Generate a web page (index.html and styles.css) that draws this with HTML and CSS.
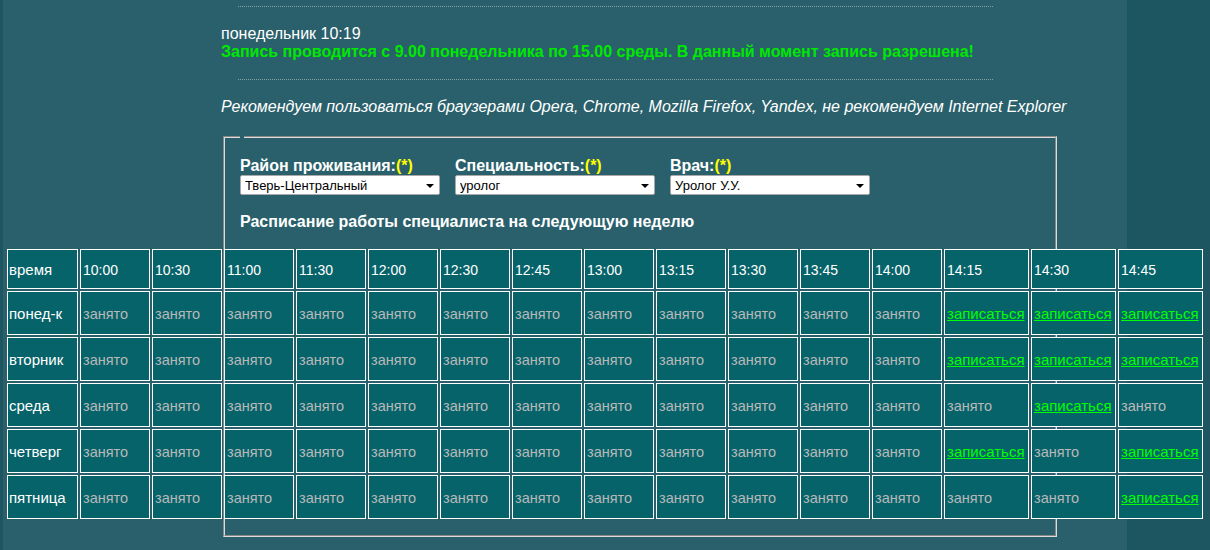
FILE: index.html
```html
<!DOCTYPE html>
<html lang="ru">
<head>
<meta charset="utf-8">
<title>Запись к врачу</title>
<link rel="stylesheet" href="styles.css">
</head>
<body>
<div class="page">
  <div class="content">
    <div class="rule"></div>
    <div class="status">понедельник 10:19</div>
    <div class="notice">Запись проводится с 9.00 понедельника по 15.00 среды. В данный момент запись разрешена!</div>
    <div class="rule rule-second"></div>
    <div class="browsers">Рекомендуем пользоваться браузерами Opera, Chrome, Mozilla Firefox, Yandex, не рекомендуем Internet Explorer</div>
    <fieldset class="box">
      <legend class="box-legend"></legend>
      <div class="filters">
        <div class="field">
          <div class="label">Район проживания:<span class="req">(*)</span></div>
          <div class="select-wrap"><select class="select"><option>Тверь-Центральный</option></select></div>
        </div>
        <div class="field">
          <div class="label">Специальность:<span class="req">(*)</span></div>
          <div class="select-wrap"><select class="select"><option>уролог</option></select></div>
        </div>
        <div class="field">
          <div class="label">Врач:<span class="req">(*)</span></div>
          <div class="select-wrap"><select class="select"><option>Уролог У.У.</option></select></div>
        </div>
      </div>
      <div class="heading">Расписание работы специалиста на следующую неделю</div>
      <table class="schedule">
        <colgroup>
          <col class="c-day">
          <col class="c-t"><col class="c-t"><col class="c-t"><col class="c-t"><col class="c-t"><col class="c-t">
          <col class="c-t"><col class="c-t"><col class="c-t"><col class="c-t"><col class="c-t"><col class="c-t">
          <col class="c-w"><col class="c-w"><col class="c-w">
        </colgroup>
        <tr class="head">
          <td class="day">время</td>
          <td>10:00</td><td>10:30</td><td>11:00</td><td>11:30</td><td>12:00</td><td>12:30</td>
          <td>12:45</td><td>13:00</td><td>13:15</td><td>13:30</td><td>13:45</td><td>14:00</td>
          <td>14:15</td><td>14:30</td><td>14:45</td>
        </tr>
        <tr>
          <td class="day">понед-к</td>
          <td class="busy">занято</td><td class="busy">занято</td><td class="busy">занято</td><td class="busy">занято</td><td class="busy">занято</td><td class="busy">занято</td>
          <td class="busy">занято</td><td class="busy">занято</td><td class="busy">занято</td><td class="busy">занято</td><td class="busy">занято</td><td class="busy">занято</td>
          <td><a class="book" href="#">записаться</a></td><td><a class="book" href="#">записаться</a></td><td><a class="book" href="#">записаться</a></td>
        </tr>
        <tr>
          <td class="day">вторник</td>
          <td class="busy">занято</td><td class="busy">занято</td><td class="busy">занято</td><td class="busy">занято</td><td class="busy">занято</td><td class="busy">занято</td>
          <td class="busy">занято</td><td class="busy">занято</td><td class="busy">занято</td><td class="busy">занято</td><td class="busy">занято</td><td class="busy">занято</td>
          <td><a class="book" href="#">записаться</a></td><td><a class="book" href="#">записаться</a></td><td><a class="book" href="#">записаться</a></td>
        </tr>
        <tr>
          <td class="day">среда</td>
          <td class="busy">занято</td><td class="busy">занято</td><td class="busy">занято</td><td class="busy">занято</td><td class="busy">занято</td><td class="busy">занято</td>
          <td class="busy">занято</td><td class="busy">занято</td><td class="busy">занято</td><td class="busy">занято</td><td class="busy">занято</td><td class="busy">занято</td>
          <td class="busy">занято</td><td><a class="book" href="#">записаться</a></td><td class="busy">занято</td>
        </tr>
        <tr>
          <td class="day">четверг</td>
          <td class="busy">занято</td><td class="busy">занято</td><td class="busy">занято</td><td class="busy">занято</td><td class="busy">занято</td><td class="busy">занято</td>
          <td class="busy">занято</td><td class="busy">занято</td><td class="busy">занято</td><td class="busy">занято</td><td class="busy">занято</td><td class="busy">занято</td>
          <td><a class="book" href="#">записаться</a></td><td class="busy">занято</td><td><a class="book" href="#">записаться</a></td>
        </tr>
        <tr>
          <td class="day">пятница</td>
          <td class="busy">занято</td><td class="busy">занято</td><td class="busy">занято</td><td class="busy">занято</td><td class="busy">занято</td><td class="busy">занято</td>
          <td class="busy">занято</td><td class="busy">занято</td><td class="busy">занято</td><td class="busy">занято</td><td class="busy">занято</td><td class="busy">занято</td>
          <td class="busy">занято</td><td class="busy">занято</td><td><a class="book" href="#">записаться</a></td>
        </tr>
      </table>
    </fieldset>
  </div>
</div>
</body>
</html>
```

FILE: styles.css
```css
html, body {
  margin: 0;
  padding: 0;
}

body {
  background: #1d5661;
  font-family: "Liberation Sans", Arial, sans-serif;
  color: #ffffff;
  overflow: hidden;
}

.page {
  margin-left: 3px;
  width: 1124px;
  height: 550px;
  box-sizing: border-box;
  padding-top: 6px;
  background: #29606b;
}

.content {
  margin-left: 218px;
  width: 860px;
}

.rule {
  margin-left: 17px;
  width: 755px;
  height: 0;
  border-top: 1px dotted #86a2a7;
}

.status {
  margin-top: 18px;
  font-size: 16px;
  line-height: 18px;
}

.notice {
  font-size: 16px;
  line-height: 18px;
  font-weight: bold;
  color: #00e800;
}

.rule-second {
  margin-top: 18px;
}

.browsers {
  margin-top: 18px;
  font-size: 16px;
  line-height: 18px;
  font-style: italic;
}

.box {
  margin: 20px 0 0 2px;
  width: 834px;
  box-sizing: border-box;
  border: 2px groove #dcdcdc;
  padding: 19px 15px 14px 15px;
  min-inline-size: 0;
}

.box-legend {
  padding: 0 2px;
  margin: 0;
  height: 0;
  font-size: 0;
}

.filters {
  display: flex;
  gap: 15px;
}

.field {
  width: 200px;
}

.label {
  font-size: 16px;
  line-height: 18px;
  font-weight: bold;
}

.req {
  color: #ffff00;
}

.select-wrap {
  position: relative;
  width: 200px;
  height: 20px;
}

.select-wrap::after {
  content: "";
  position: absolute;
  right: 6px;
  top: 9px;
  width: 0;
  height: 0;
  border-left: 4px solid transparent;
  border-right: 4px solid transparent;
  border-top: 4px solid #000;
  pointer-events: none;
}

.select {
  appearance: none;
  -webkit-appearance: none;
  display: block;
  width: 200px;
  height: 20px;
  margin: 0;
  box-sizing: border-box;
  border: 1px solid #a9a9a9;
  border-radius: 2px;
  background: #ffffff;
  color: #000;
  font-family: "Liberation Sans", Arial, sans-serif;
  font-size: 13px;
  line-height: 16px;
  padding: 2px 0 0 4px;
}

.heading {
  margin-top: 18px;
  font-size: 16px;
  line-height: 18px;
  font-weight: bold;
}

.schedule {
  margin-top: 16px;
  margin-left: -235px;
  width: 1200px;
  table-layout: fixed;
  border-collapse: separate;
  border-spacing: 2px;
}

.c-day { width: 71px; }
.c-t { width: 70px; }
.c-w { width: 85px; }

.schedule td {
  box-sizing: border-box;
  height: 44px;
  padding: 1px 2px 0 2px;
  border: 1px solid #ffffff;
  background: #07636a;
  color: #ffffff;
  font-size: 14px;
  text-align: left;
  vertical-align: middle;
  white-space: nowrap;
  overflow: hidden;
}

.schedule .head td {
  height: 40px;
}

.schedule td.day {
  font-size: 15px;
  padding-left: 1px;
}

.schedule td.busy {
  color: #b8b8b8;
  font-size: 14.5px;
}

.book {
  color: #00ff00;
  font-size: 15px;
  text-decoration: underline;
}
```
